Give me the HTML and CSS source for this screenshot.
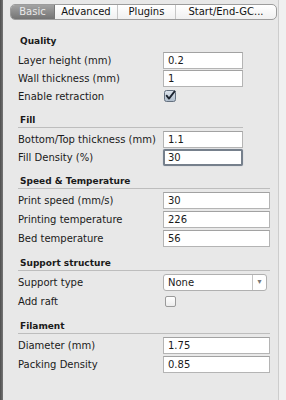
FILE: index.html
```html
<!DOCTYPE html>
<html>
<head>
<meta charset="utf-8">
<link rel="stylesheet" href="styles.css">
</head>
<body>
<div class="window">
  <div class="edge"></div>
  <div class="panel">
    <div class="tabs">
      <div class="tab active t1">Basic</div>
      <div class="tab t2">Advanced</div>
      <div class="tab t3">Plugins</div>
      <div class="tab t4">Start/End-GC...</div>
    </div>

    <section class="group narrow first">
      <h2>Quality</h2>
      <div class="row"><span class="label">Layer height (mm)</span><div class="field">0.2</div></div>
      <div class="row"><span class="label">Wall thickness (mm)</span><div class="field">1</div></div>
      <div class="row"><span class="label">Enable retraction</span>
        <svg class="check" width="12" height="12" viewBox="0 0 12 12">
          <defs><linearGradient id="cg" x1="0" y1="0" x2="0" y2="1"><stop offset="0" stop-color="#dfe6ee"/><stop offset="1" stop-color="#aebccb"/></linearGradient></defs>
          <rect x="0.5" y="0.5" width="11" height="11" rx="2" fill="url(#cg)" stroke="#65717f"/>
          <path d="M2.6 5.6 L5 8.6 L10.6 1.4" fill="none" stroke="#1c2430" stroke-width="1.8" stroke-linecap="round" stroke-linejoin="round"/>
        </svg>
      </div>
    </section>

    <section class="group narrow">
      <h2>Fill</h2>
      <div class="row"><span class="label">Bottom/Top thickness (mm)</span><div class="field">1.1</div></div>
      <div class="row"><span class="label">Fill Density (%)</span><div class="field focus">30</div></div>
    </section>

    <section class="group wide">
      <h2>Speed &amp; Temperature</h2>
      <div class="row"><span class="label">Print speed (mm/s)</span><div class="field">30</div></div>
      <div class="row"><span class="label">Printing temperature</span><div class="field">226</div></div>
      <div class="row"><span class="label">Bed temperature</span><div class="field">56</div></div>
    </section>

    <section class="group wide">
      <h2>Support structure</h2>
      <div class="row"><span class="label">Support type</span>
        <div class="select"><span class="value">None</span><span class="arrow">&#9662;</span></div>
      </div>
      <div class="row"><span class="label">Add raft</span><span class="box"></span></div>
    </section>

    <section class="group wide">
      <h2>Filament</h2>
      <div class="row"><span class="label">Diameter (mm)</span><div class="field">1.75</div></div>
      <div class="row"><span class="label">Packing Density</span><div class="field">0.85</div></div>
    </section>
  </div>
  <div class="side"></div>
</div>
</body>
</html>
```

FILE: styles.css
```css
html, body {
  margin: 0;
  padding: 0;
  background: #e8e8e8;
}

body {
  font-family: "DejaVu Sans", "Liberation Sans", sans-serif;
  font-size: 10px;
  color: #1a1a1a;
}

.window {
  display: flex;
  width: 286px;
  height: 400px;
  overflow: hidden;
}

.edge {
  width: 3px;
  flex: none;
  background: linear-gradient(to right, #4e4e4e, #767676);
}

.panel {
  flex: 1;
  background: #e8e8e8;
}

.side {
  width: 7px;
  flex: none;
  border-left: 1px solid #cdcdcd;
  background: #f0f0f0;
}

/* tabs */
.tabs {
  display: flex;
  box-sizing: border-box;
  width: 267px;
  height: 16px;
  margin: 4px 0 0 7px;
  border: 1px solid #9c9c9c;
  border-radius: 5px;
  background: linear-gradient(#ffffff, #f0f0f0);
  overflow: hidden;
}

.tab {
  box-sizing: border-box;
  border-right: 1px solid #c6c6c6;
  text-align: center;
  line-height: 14px;
  font-size: 10px;
  color: #111;
}

.tab:last-child { border-right: none; }
.t1 { width: 44px; }
.t2 { width: 63px; }
.t3 { width: 58px; }
.t4 { flex: 1; }

.tab.active {
  background: linear-gradient(#a3a3a3, #747474);
  color: #e9e9e9;
  border-right-color: #777;
}

/* groups */
.group {
  margin-left: 15px;
  margin-top: 9px;
}

.group.first { margin-top: 15px; }
.group.narrow { width: 225px; }
.group.wide { width: 252px; }

.group h2 {
  margin: 0 0 2px 0;
  padding-left: 2px;
  height: 13px;
  line-height: 13px;
  font-size: 9px;
  font-weight: bold;
  color: #1a1a1a;
  border-bottom: 1px solid #bdbdbd;
}

.group.first h2 { border-bottom-color: transparent; }

.row {
  display: flex;
  align-items: center;
  height: 18px;
}

.wide .row { height: 19px; }

.label {
  width: 145px;
  flex: none;
  white-space: nowrap;
}

.field {
  box-sizing: border-box;
  height: 17px;
  flex: 1;
  padding-left: 4px;
  line-height: 15px;
  background: #fff;
  border: 1px solid #b4b4b4;
  border-top-color: #a2a2a2;
  color: #1a1a1a;
}

.narrow .field { flex: none; width: 80px; }

.field.focus {
  border: 2px solid #76808c;
  border-radius: 2px;
  padding-left: 3px;
  line-height: 13px;
  box-shadow: 0 0 1px #9aa6b4;
}

.check { display: block; margin-left: 1px; }

.box {
  box-sizing: border-box;
  width: 11px;
  height: 11px;
  margin-left: 2px;
  border: 1px solid #9a9a9a;
  border-radius: 2px;
  background: linear-gradient(#ffffff, #ececec);
}

.select {
  box-sizing: border-box;
  display: flex;
  width: 104px;
  height: 17px;
  border: 1px solid #b0b0b0;
  border-radius: 3px;
  background: #fff;
}

.select .value {
  flex: 1;
  padding-left: 4px;
  line-height: 15px;
  border-right: 1px solid #c4c4c4;
}

.select .arrow {
  width: 13px;
  text-align: center;
  font-size: 8px;
  line-height: 14px;
  color: #777;
}
```
